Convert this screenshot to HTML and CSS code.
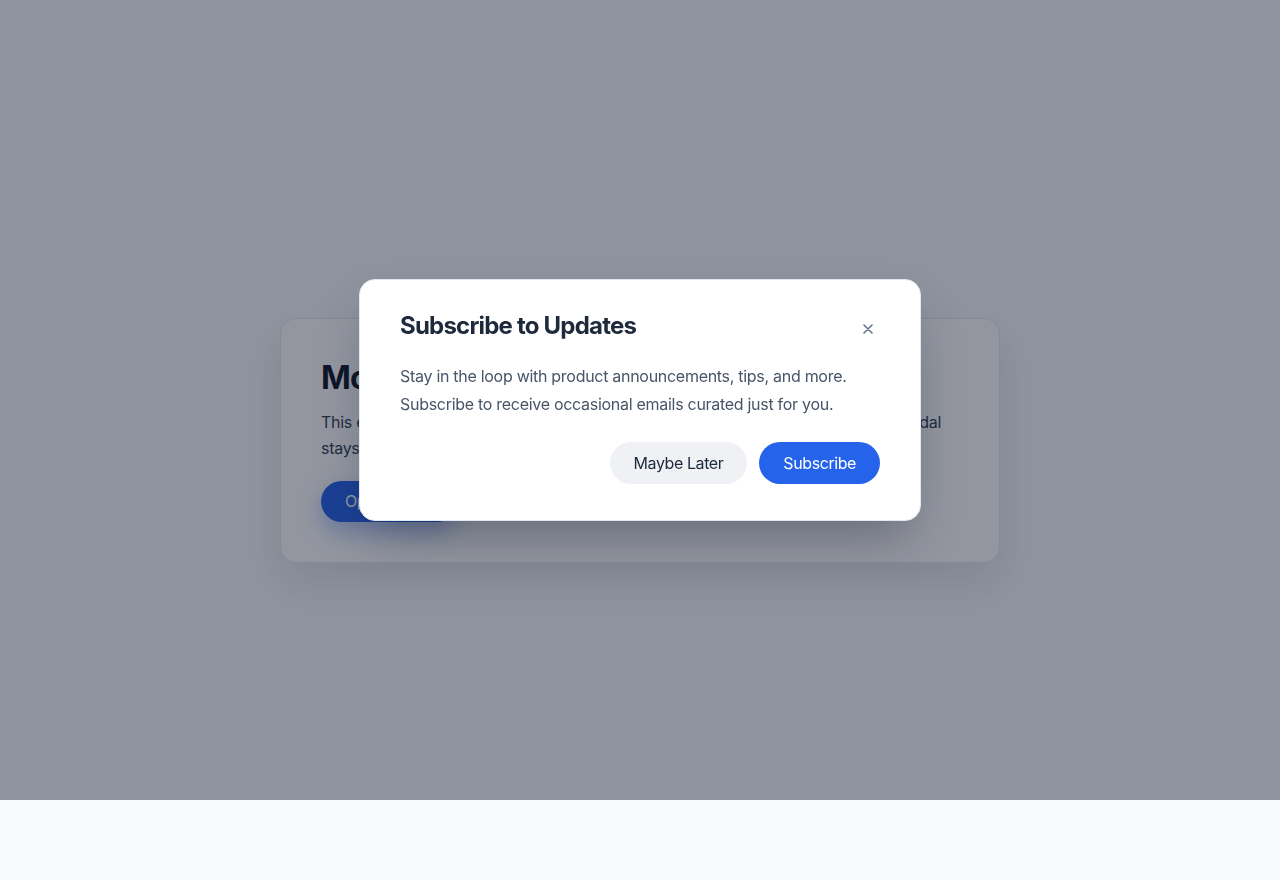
FILE: index.html
```html
<!DOCTYPE html>
<html lang="en">
<head>
<meta charset="utf-8">
<title>Subscribe to Updates</title>
<link rel="stylesheet" href="styles.css">
</head>
<body>
  <main class="page">
    <section class="card">
      <h1 class="card-title">Modal Example</h1>
      <p class="card-text">This example shows a centered dialog that appears above your page while the modal stays open, and the rest of the content remains dimmed in the background.</p>
      <button class="btn btn-primary btn-open" type="button">Open Modal</button>
    </section>
  </main>

  <div class="overlay">
    <div class="modal" role="dialog" aria-modal="true" aria-labelledby="modal-title">
      <div class="modal-header">
        <h2 class="modal-title" id="modal-title">Subscribe to Updates</h2>
        <button class="close" type="button" aria-label="Close">
          <svg width="10" height="10" viewBox="0 0 10 10" aria-hidden="true">
            <path d="M1 1 L9 9 M9 1 L1 9" stroke="currentColor" stroke-width="1.6" stroke-linecap="round" fill="none"/>
          </svg>
        </button>
      </div>
      <p class="modal-text">Stay in the loop with product announcements, tips, and more.<br>Subscribe to receive occasional emails curated just for you.</p>
      <div class="modal-actions">
        <button class="btn btn-secondary" type="button">Maybe Later</button>
        <button class="btn btn-primary" type="button">Subscribe</button>
      </div>
    </div>
  </div>
</body>
</html>
```

FILE: styles.css
```css
* { box-sizing: border-box; }

html, body {
  margin: 0;
  padding: 0;
}

body {
  background: #f8fafc;
  font-family: Inter, "Noto Sans", "Liberation Sans", sans-serif;
  color: #0f172a;
  letter-spacing: -0.018em;
}

.page {
  min-height: 100vh;
  display: flex;
  align-items: center;
  justify-content: center;
}

.card {
  width: 720px;
  background: #ffffff;
  border: 1px solid #e2e8f0;
  border-radius: 16px;
  padding: 40px 40px 40px;
  box-shadow: 0 20px 40px rgba(15, 23, 42, 0.10);
}

.card-title {
  margin: 0;
  font-size: 32px;
  line-height: 38px;
  font-weight: 700;
  letter-spacing: -0.025em;
  color: #0f172a;
}

.card-text {
  margin: 12px 0 20px;
  font-size: 16px;
  line-height: 26px;
  color: #334155;
}

.btn {
  font-family: inherit;
  font-size: 16px;
  font-weight: 400;
  line-height: 20px;
  letter-spacing: -0.026em;
  border: none;
  border-radius: 999px;
  padding: 11px 24px;
  cursor: pointer;
}

.btn-primary {
  background: #2563eb;
  color: #ffffff;
}

.btn-open {
  padding: 10px 24px;
  line-height: 21px;
  box-shadow: 0 10px 24px rgba(37, 99, 235, 0.35);
}

.btn-secondary {
  background: #eff1f5;
  color: #1e293b;
}

.overlay {
  position: fixed;
  top: 0;
  left: 0;
  right: 0;
  height: 800px;
  background: rgba(15, 23, 42, 0.45);
  display: flex;
  align-items: center;
  justify-content: center;
}

.modal {
  width: 562px;
  background: #ffffff;
  border: 1px solid #e2e8f0;
  border-radius: 16px;
  padding: 30px 40px 36px;
  box-shadow: 0 25px 50px -12px rgba(15, 23, 42, 0.35);
}

.modal-header {
  display: flex;
  justify-content: space-between;
  align-items: flex-start;
}

.modal-title {
  margin: 0;
  font-size: 24px;
  line-height: 32px;
  font-weight: 700;
  letter-spacing: -0.033em;
  color: #1e293b;
}

.close {
  width: 24px;
  height: 24px;
  margin-top: 7px;
  padding: 0;
  border: none;
  background: transparent;
  color: #64748b;
  display: flex;
  align-items: center;
  justify-content: center;
  cursor: pointer;
}

.modal-text {
  margin: 20px 0 24px;
  font-size: 16px;
  line-height: 28px;
  color: #475569;
}

.modal-actions {
  display: flex;
  justify-content: flex-end;
  gap: 12px;
}
```
